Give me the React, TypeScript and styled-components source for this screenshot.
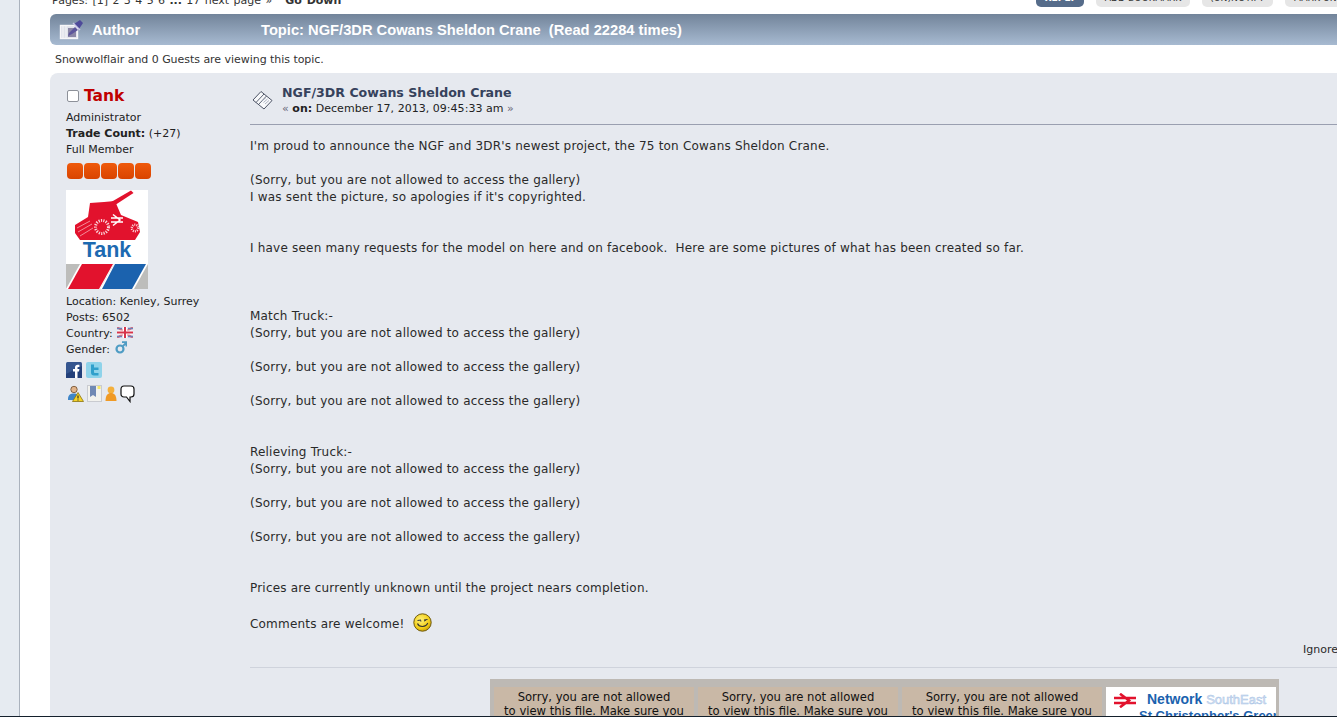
import styled, { createGlobalStyle } from 'styled-components'

const posterLines = ['Administrator']

const GlobalStyle = createGlobalStyle`
html, body { margin: 0; padding: 0; background: #fff; }
body { font-family: "DejaVu Sans", Verdana, sans-serif; color: #222; }
`

const TankAvatar = () => (
  <svg width="82" height="99" viewBox="0 0 82 99">
    <rect width="82" height="99" fill="#fff" />
    <path d="M40 15 L65 0.5 L67.5 3 L43 19 Z" fill="#e2122d" />
    <path d="M9 35 L22 27 L24 13 L38 12 L49 11 L55 25 L72 32 L74 42 L69 50 L14 50 L9 43 Z" fill="#e2122d" />
    <path d="M11 38 L24 31 M12 42 L26 34 M14 46 L27 38" stroke="#f6a9b4" strokeWidth="0.8" />
    <circle cx="36" cy="37" r="6.5" fill="none" stroke="#fbd5da" strokeWidth="3" strokeDasharray="1.2 1.2" />
    <circle cx="69" cy="38" r="3.2" fill="none" stroke="#fbd5da" strokeWidth="2.4" strokeDasharray="1 1" />
    <path d="M45 28 H57 M45 32 H57 M47 24.5 L54 30 L47 35.5" stroke="#fff" strokeWidth="1.5" fill="none" />
    <text x="41" y="67" textAnchor="middle" fontFamily="Liberation Sans, sans-serif" fontWeight="700" fontSize="21.5" fill="#1d6ab1">Tank</text>
    <rect y="74" width="82" height="25" fill="#bdbdbb" />
    <path d="M14 74 H48 L34 99 H0 Z" fill="#fff" />
    <path d="M16 74 H47 L33 99 H2 Z" fill="#e2122d" />
    <path d="M48 74 H82 L68 99 H34 Z" fill="#fff" />
    <path d="M49 74 H80 L66 99 H36 Z" fill="#1b62ae" />
  </svg>
)

const FlagIcon = () => (
  <svg width="16" height="11" viewBox="0 0 16 11">
    <rect width="16" height="11" fill="#dfe3f0" />
    <path d="M0 0 L16 11 M16 0 L0 11" stroke="#e2707e" strokeWidth="2" />
    <path d="M8 0 V11 M0 5.5 H16" stroke="#fff" strokeWidth="4" />
    <path d="M8 0 V11 M0 5.5 H16" stroke="#d6344a" strokeWidth="2" />
    <path d="M0 1.5 H5 M0 9.5 H5 M11 1.5 H16 M11 9.5 H16" stroke="#6f80b5" strokeWidth="1.4" />
  </svg>
)

const MarsIcon = () => (
  <svg width="12" height="13" viewBox="0 0 12 13">
    <circle cx="5" cy="8" r="3.5" fill="none" stroke="#4f9cc4" strokeWidth="2.2" />
    <path d="M7.5 5.5 L11 2 M7 1.2 H11.4 V5.6" fill="none" stroke="#4f9cc4" strokeWidth="1.8" />
  </svg>
)

const FacebookIcon = () => (
  <svg width="16" height="16" viewBox="0 0 16 16">
    <rect width="16" height="16" rx="1.5" fill="#34558f" />
    <path d="M16 4 L0 12 V16 H16 Z" fill="#23407a" />
    <path d="M9 16 V9.5 H7 V7 H9 V5.4 C9 3.6 10.2 2.7 11.6 2.7 H13.4 V5 H12.2 C11.6 5 11.5 5.3 11.5 5.8 V7 H13.4 L13 9.5 H11.5 V16 Z" fill="#fff" />
  </svg>
)

const TwitterIcon = () => (
  <svg width="16" height="16" viewBox="0 0 16 16">
    <rect width="16" height="16" rx="2" fill="#8fd3ea" />
    <path d="M5 2.5 H8 V5.5 H12.5 V8 H8 V10 C8 10.8 8.5 11 9.2 11 H12.5 V13.5 H8 C6 13.5 5 12.4 5 10.6 Z" fill="#2f9fcb" />
  </svg>
)

const WarnUserIcon = () => (
  <svg width="17" height="17" viewBox="0 0 17 17">
    <circle cx="7" cy="4.5" r="3.2" fill="#e2b48a" stroke="#6b4a2a" strokeWidth="0.8" />
    <path d="M1 14 C1 9.5 4 8.5 7 8.5 C9 8.5 10 9 10.5 10 L7 15 H1 Z" fill="#3f86c9" />
    <path d="M11 7.5 L16.5 16.5 H5.5 Z" fill="#f5d327" stroke="#8a7410" strokeWidth="0.8" />
    <path d="M11 10.5 V13.5 M11 14.5 V15.5" stroke="#222" strokeWidth="1.1" />
  </svg>
)

const NoteIcon = () => (
  <svg width="15" height="17" viewBox="0 0 15 17">
    <rect x="0.5" y="0.5" width="14" height="16" fill="#f2f2ee" stroke="#c9cbd0" />
    <path d="M3 1 H9 V12 L6 10 L3 12 Z" fill="#7089b4" />
    <rect x="10.5" y="1" width="3" height="3" fill="#f4e66a" />
  </svg>
)

const OrangeUserIcon = () => (
  <svg width="12" height="17" viewBox="0 0 12 17">
    <circle cx="6" cy="5" r="3.4" fill="#f4b03c" />
    <path d="M0.5 16 C0.5 10 3 8 6 8 C9 8 11.5 10 11.5 16 Z" fill="#f09a25" />
  </svg>
)

const BubbleIcon = () => (
  <svg width="15" height="18" viewBox="0 0 15 18">
    <path d="M4 1 H11 C13 1 14 2.2 14 4 V9 C14 10.8 13 12 11 12 H10 V16.5 L6.5 12 H4 C2 12 1 10.8 1 9 V4 C1 2.2 2 1 4 1 Z" fill="#fff" stroke="#111" strokeWidth="1.2" />
  </svg>
)

const PostIcon = () => (
  <svg width="22" height="20" viewBox="0 0 22 20">
    <path d="M1 10 L9 1.5 L20 10.5 L12 19 Z" fill="#f8f9fb" stroke="#4b5264" strokeWidth="1" />
    <path d="M4 12.5 L12 4 M6.5 14.5 L14.5 6" stroke="#4b5264" strokeWidth="0.9" />
    <path d="M10 11 L14 7.5 M11.5 12.5 L15.5 9 M13 14 L17 10.5" stroke="#9aa1b2" strokeWidth="0.8" />
  </svg>
)

const TitleIcon = () => (
  <svg width="26" height="22" viewBox="0 0 26 22">
    <rect x="1.5" y="6.5" width="17" height="13" fill="#dfe2ea" stroke="#f6f6f8" strokeWidth="1.4" />
    <path d="M4 6 V20 M7 6 V20" stroke="#f6f6f8" strokeWidth="1" />
    <rect x="9" y="9" width="8" height="9" fill="#8a86a6" />
    <path d="M10 14 L16 8 L19 11 L13 15 L9 17 Z" fill="#5d569c" />
    <path d="M15 5 L20 10 L24 4 L21 1 Z" fill="#4e4a9a" />
    <path d="M14 4 L21 11" stroke="#c9c6e6" strokeWidth="1.4" />
  </svg>
)

const Smiley = () => (
  <svg width="19" height="19" viewBox="0 0 19 19">
    <defs>
      <radialGradient id="sm" cx="40%" cy="35%" r="70%">
        <stop offset="0%" stopColor="#fff27a" />
        <stop offset="70%" stopColor="#f2cc13" />
        <stop offset="100%" stopColor="#c49a06" />
      </radialGradient>
    </defs>
    <circle cx="9.5" cy="9.5" r="8.7" fill="url(#sm)" stroke="#6e5a10" strokeWidth="1" />
    <path d="M4.5 7.5 L8 7 M11 7 L14.5 6.5 M7 7.8 L8.4 8 M12.8 7.4 L11 8" stroke="#333" strokeWidth="1" fill="none" />
    <path d="M4.5 10.5 C6 14.5 13 14.5 14.8 10" stroke="#333" strokeWidth="1.1" fill="none" />
  </svg>
)

const RailArrows = () => (
  <svg width="24" height="15" viewBox="0 0 24 15">
    <path d="M1 5 H23 M1 10 H23 M7 0.8 L16 7.5 L7 14.2" stroke="#e2122d" strokeWidth="2.6" fill="none" />
  </svg>
)

const Stars = () => (
  <StarRow>
    {[0, 1, 2, 3, 4].map((n) => (
      <Star key={n} />
    ))}
  </StarRow>
)

const SorryCell = () => (
  <SigCell>
    Sorry, you are not allowed
    <br />
    to view this file. Make sure you
  </SigCell>
)

const App = () => {
  return (
    <Frame>
      <GlobalStyle />
      <Viewport>
        <SideStripe />
        <Main>
          <PagerRow>
            <PagerText>
              Pages: [1] 2 3 4 5 6 <b>...</b> 17 next page »&nbsp;&nbsp;&nbsp;<b>Go Down</b>
            </PagerText>
            <ButtonRow>
              <TopButton $primary>REPLY</TopButton>
              <TopButton>ADD BOOKMARK</TopButton>
              <TopButton>(UN)NOTIFY</TopButton>
              <TopButton>MARK UNREAD</TopButton>
            </ButtonRow>
          </PagerRow>

          <TitleBar>
            <TitleIcon />
            <AuthorLabel>Author</AuthorLabel>
            <TopicLabel>Topic: NGF/3DR Cowans Sheldon Crane &nbsp;(Read 22284 times)</TopicLabel>
          </TitleBar>

          <Viewing>Snowwolflair and 0 Guests are viewing this topic.</Viewing>

          <PostPanel>
            <Poster>
              <PosterName>
                <OfflineBox />
                Tank
              </PosterName>
              <InfoList>
                {posterLines.map((l) => (
                  <InfoLine key={l}>{l}</InfoLine>
                ))}
                <InfoLine>
                  <b>Trade Count:</b> (+27)
                </InfoLine>
                <InfoLine>Full Member</InfoLine>
              </InfoList>
              <Stars />
              <AvatarWrap>
                <TankAvatar />
              </AvatarWrap>
              <InfoList>
                <InfoLine>Location: Kenley, Surrey</InfoLine>
                <InfoLine>Posts: 6502</InfoLine>
                <InfoLine>
                  Country: <FlagIcon />
                </InfoLine>
                <InfoLine>
                  Gender: <MarsIcon />
                </InfoLine>
              </InfoList>
              <SocialRow>
                <FacebookIcon />
                <TwitterIcon />
              </SocialRow>
              <ActionRow>
                <WarnUserIcon />
                <NoteIcon />
                <OrangeUserIcon />
                <BubbleIcon />
              </ActionRow>
            </Poster>

            <PostArea>
              <PostHeader>
                <PostIcon />
                <div>
                  <PostTitle>NGF/3DR Cowans Sheldon Crane</PostTitle>
                  <PostDate>
                    <Guillemet>«</Guillemet> <b>on:</b> December 17, 2013, 09:45:33 am <Guillemet>»</Guillemet>
                  </PostDate>
                </div>
              </PostHeader>

              <PostBody>
                I'm proud to announce the NGF and 3DR's newest project, the 75 ton Cowans Sheldon Crane.
                <br />
                <br />
                (Sorry, but you are not allowed to access the gallery)
                <br />
                I was sent the picture, so apologies if it's copyrighted.
                <br />
                <br />
                <br />
                I have seen many requests for the model on here and on facebook.&nbsp; Here are some pictures of what has been created so far.
                <br />
                <br />
                <br />
                <br />
                Match Truck:-
                <br />
                (Sorry, but you are not allowed to access the gallery)
                <br />
                <br />
                (Sorry, but you are not allowed to access the gallery)
                <br />
                <br />
                (Sorry, but you are not allowed to access the gallery)
                <br />
                <br />
                <br />
                Relieving Truck:-
                <br />
                (Sorry, but you are not allowed to access the gallery)
                <br />
                <br />
                (Sorry, but you are not allowed to access the gallery)
                <br />
                <br />
                (Sorry, but you are not allowed to access the gallery)
                <br />
                <br />
                <br />
                Prices are currently unknown until the project nears completion.
                <br />
                <CommentsLine>
                  Comments are welcome!&nbsp;
                  <SmileyWrap>
                    <Smiley />
                  </SmileyWrap>
                </CommentsLine>
              </PostBody>

              <Moderation>Ignore</Moderation>

              <Signature>
                <SigBox>
                  <SorryCell />
                  <SorryCell />
                  <SorryCell />
                  <SigLogo>
                    <RailArrows />
                    <SigBrand>
                      Network <SigFaint>SouthEast</SigFaint>
                    </SigBrand>
                    <SigPlace>St Christopher's Green</SigPlace>
                  </SigLogo>
                </SigBox>
              </Signature>
            </PostArea>
          </PostPanel>
        </Main>
      </Viewport>
      <BottomEdge />
    </Frame>
  )
}

export default App

const Frame = styled.div`
  width: 1337px;
  height: 717px;
  display: flex;
  flex-direction: column;
  overflow: hidden;
`
const Viewport = styled.div`
  flex: 1;
  min-height: 0;
  display: flex;
  overflow: hidden;
`
const BottomEdge = styled.div`
  height: 1px;
  background: #14202c;
`
const SideStripe = styled.div`
  flex: 0 0 19px;
  background: #e6ebf1;
  border-right: 1px solid #aab2bd;
`
const Main = styled.div`
  flex: 0 0 1400px;
  padding-left: 30px;
  background: #fff;
`
const PagerRow = styled.div`
  height: 7px;
  display: flex;
  align-items: flex-end;
  overflow: hidden;
`
const PagerText = styled.div`
  flex: 0 0 984px;
  padding-left: 2px;
  margin-bottom: -1px;
  font-size: 11px;
  line-height: 14px;
  color: #333;
  white-space: nowrap;
  word-spacing: 0.9px;
`
const ButtonRow = styled.div`
  display: flex;
  gap: 12px;
`
const TopButton = styled.div<{ $primary?: boolean }>`
  height: 20px;
  padding: 0 8.5px 3px;
  border-radius: 5px;
  display: flex;
  align-items: flex-end;
  box-sizing: border-box;
  font-size: 9.2px;
  line-height: 12px;
  white-space: nowrap;
  font-weight: ${({ $primary }) => ($primary ? 700 : 400)};
  color: ${({ $primary }) => ($primary ? '#fff' : '#333')};
  background: ${({ $primary }) => ($primary ? '#566c8a' : '#e6e6e6')};
`
const TitleBar = styled.div`
  margin-top: 7px;
  height: 31px;
  display: flex;
  align-items: center;
  padding-left: 9px;
  border-radius: 6px 0 0 6px;
  background: linear-gradient(#72849a, #a7bad1);
  color: #fff;
  font-family: "Liberation Sans", Arial, sans-serif;
  font-size: 14.7px;
  font-weight: 700;
`
const AuthorLabel = styled.span`
  width: 169px;
  margin-left: 7px;
`
const TopicLabel = styled.span`
  white-space: nowrap;
`
const Viewing = styled.div`
  height: 28px;
  padding-left: 5px;
  font-size: 11px;
  line-height: 30px;
  letter-spacing: -0.04px;
  color: #333;
`
const PostPanel = styled.div`
  display: flex;
  height: 660px;
  background: #e6e9ef;
  border-radius: 8px 0 0 0;
  padding-left: 16px;
`
const Poster = styled.div`
  flex: 0 0 184px;
  padding-top: 14px;
  font-size: 11px;
  color: #222;
`
const PosterName = styled.div`
  display: flex;
  align-items: center;
  gap: 5px;
  height: 18px;
  padding-left: 1px;
  font-size: 15.5px;
  font-weight: 700;
  color: #c00000;
`
const OfflineBox = styled.span`
  width: 10px;
  height: 10px;
  background: #fff;
  border: 1px solid #8d9199;
  border-radius: 2px;
`
const InfoList = styled.div`
  display: flex;
  flex-direction: column;
`
const InfoLine = styled.div`
  height: 16px;
  line-height: 16px;
  white-space: nowrap;
  &:first-child { margin-top: 5px; }
  svg { vertical-align: -1px; margin: -3px 0 0 1px; }
`
const StarRow = styled.div`
  display: flex;
  gap: 1px;
  margin-top: 5px;
  padding-left: 1px;
`
const Star = styled.span`
  width: 16px;
  height: 16px;
  border-radius: 4px;
  background: linear-gradient(#ef5a0c, #d94400);
`
const AvatarWrap = styled.div`
  margin-top: 11px;
  height: 99px;
  svg { display: block; }
`
const SocialRow = styled.div`
  display: flex;
  gap: 4px;
  margin-top: 4px;
`
const ActionRow = styled.div`
  display: flex;
  gap: 3px;
  margin-top: 7px;
  padding-left: 1px;
  align-items: flex-start;
`
const PostArea = styled.div`
  flex: 0 0 1100px;
  font-size: 12px;
  color: #2a2a2a;
`
const PostHeader = styled.div`
  height: 52px;
  box-sizing: border-box;
  padding: 12px 0 0 2px;
  display: flex;
  gap: 8px;
  border-bottom: 1px solid #9a9fb0;
  svg { margin-top: 5px; flex: none; }
`
const PostTitle = styled.div`
  font-size: 12.6px;
  line-height: 16px;
  font-weight: 700;
  color: #36425c;
`
const PostDate = styled.div`
  font-size: 11px;
  line-height: 15px;
  letter-spacing: 0.03px;
  color: #222;
`
const Guillemet = styled.span`
  color: #667;
`
const PostBody = styled.div`
  padding-top: 13px;
  line-height: 17px;
  letter-spacing: 0.2px;
  white-space: nowrap;
`
const CommentsLine = styled.div`
  margin-top: 16px;
  height: 20px;
`
const SmileyWrap = styled.span`
  display: inline-block;
  margin-left: 4px;
  vertical-align: -4px;
  height: 19px;
`
const Moderation = styled.div`
  margin-top: 8px;
  height: 27px;
  line-height: 17px;
  font-size: 11px;
  padding-left: 1053px;
  border-bottom: 1px solid #cfd3dc;
  box-sizing: border-box;
`
const Signature = styled.div`
  padding: 11px 0 0 240px;
`
const SigBox = styled.div`
  width: 789px;
  height: 60px;
  display: flex;
  gap: 4px;
  box-sizing: border-box;
  padding: 8px 3px 0 4px;
  background: #bdb9b4;
`
const SigCell = styled.div`
  flex: 0 0 200px;
  box-sizing: border-box;
  padding-top: 3px;
  background: #c9b8a6;
  text-align: center;
  font-size: 11.6px;
  line-height: 14px;
  color: #111;
  white-space: nowrap;
  overflow: hidden;
`
const SigLogo = styled.div`
  flex: 1;
  background: #fff;
  position: relative;
  font-family: "Liberation Sans", Arial, sans-serif;
  font-weight: 700;
  color: #1b62ae;
  white-space: nowrap;
  overflow: hidden;
  svg { position: absolute; left: 7px; top: 6px; }
`
const SigBrand = styled.div`
  padding: 4px 0 0 41px;
  font-size: 14px;
  line-height: 16px;
`
const SigFaint = styled.span`
  font-size: 13px;
  font-weight: 400;
  color: #dbe6f4;
  -webkit-text-stroke: 0.5px #a9c4e6;
`
const SigPlace = styled.div`
  padding-left: 33px;
  font-size: 13px;
  line-height: 15px;
`
